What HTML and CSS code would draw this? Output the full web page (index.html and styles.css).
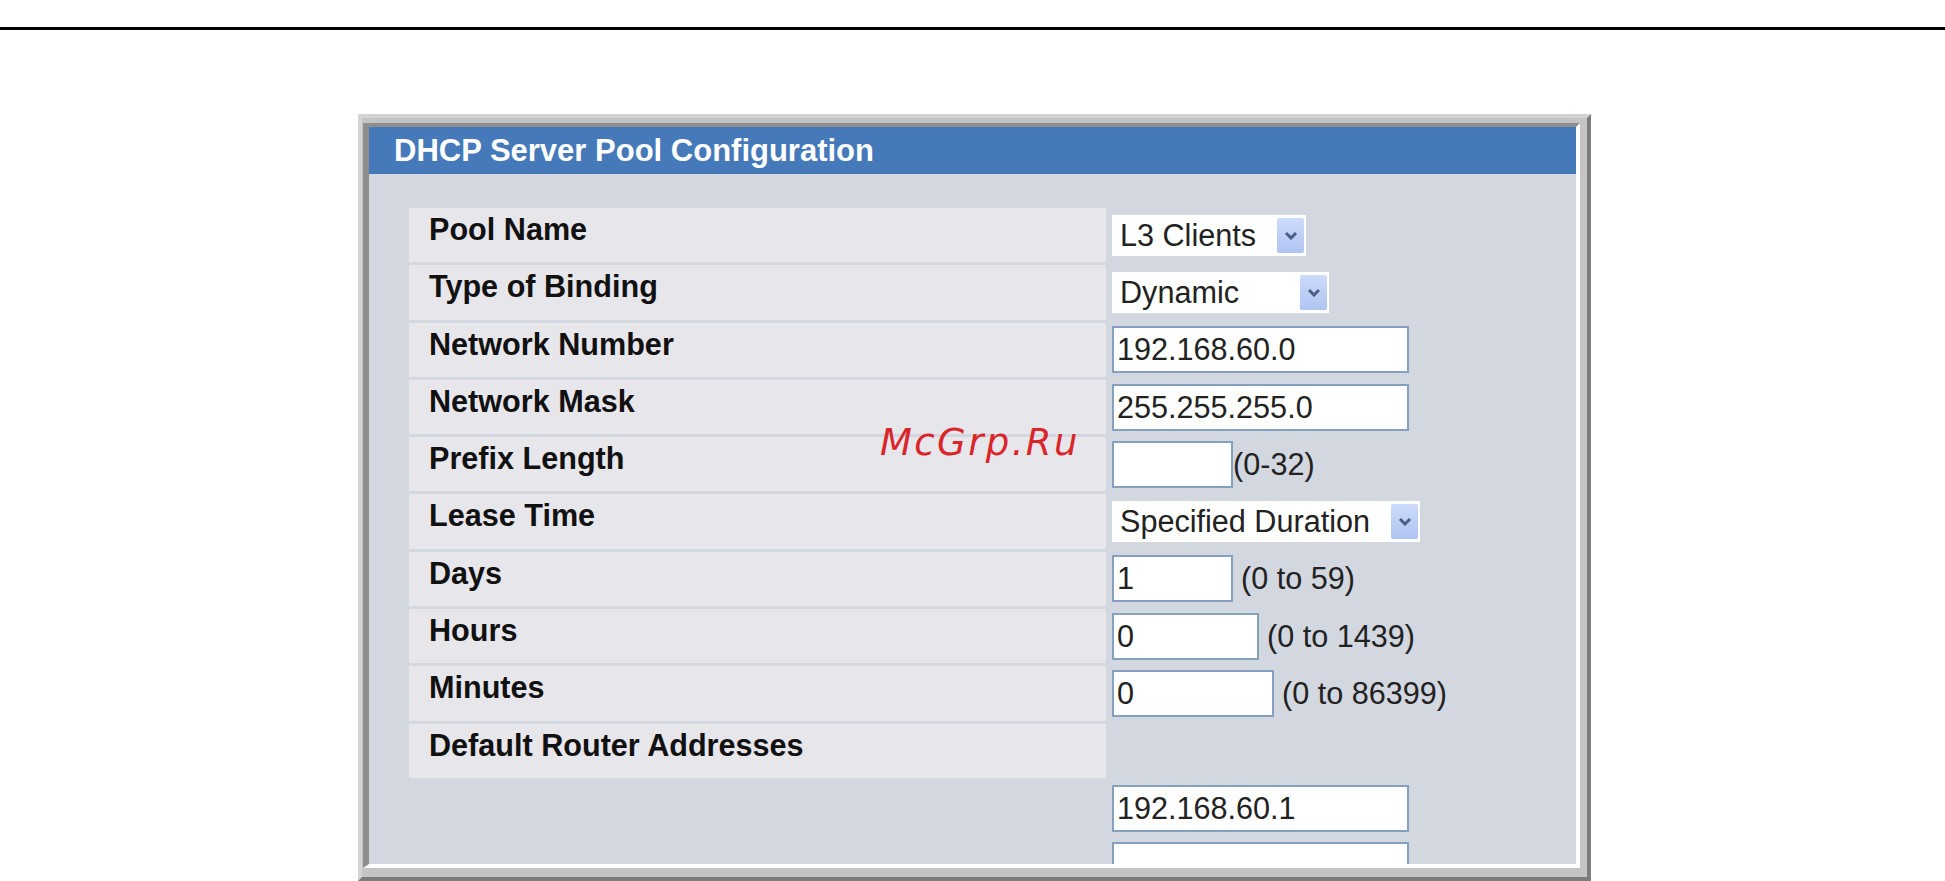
FILE: index.html
```html
<!DOCTYPE html>
<html lang="en">
<head>
    <meta charset="UTF-8">
    <title>DHCP Server Pool Configuration</title>
    <link rel="stylesheet" href="styles.css">
</head>
<body>
    <div class="top-rule"></div>

    <div class="window">
        <div class="window-inner">
            <div class="title-bar">DHCP Server Pool Configuration</div>
            <div class="panel">
                <div class="form-grid">
                    <div class="label">Pool Name</div>
                    <div class="value">
                        <div class="select w-pool"><span>L3 Clients</span><span class="arrow"><svg width="14" height="9" viewBox="0 0 14 9"><path d="M2 2 L7 7 L12 2" fill="none" stroke="#4b5f86" stroke-width="3"/></svg></span></div>
                    </div>

                    <div class="label">Type of Binding</div>
                    <div class="value">
                        <div class="select w-binding"><span>Dynamic</span><span class="arrow"><svg width="14" height="9" viewBox="0 0 14 9"><path d="M2 2 L7 7 L12 2" fill="none" stroke="#4b5f86" stroke-width="3"/></svg></span></div>
                    </div>

                    <div class="label">Network Number</div>
                    <div class="value"><input class="field w-ip" type="text" value="192.168.60.0"></div>

                    <div class="label">Network Mask</div>
                    <div class="value"><input class="field w-ip" type="text" value="255.255.255.0"></div>

                    <div class="label">Prefix Length</div>
                    <div class="value"><input class="field w-short" type="text" value=""><span>(0-32)</span></div>

                    <div class="label">Lease Time</div>
                    <div class="value">
                        <div class="select w-lease"><span>Specified Duration</span><span class="arrow"><svg width="14" height="9" viewBox="0 0 14 9"><path d="M2 2 L7 7 L12 2" fill="none" stroke="#4b5f86" stroke-width="3"/></svg></span></div>
                    </div>

                    <div class="label">Days</div>
                    <div class="value"><input class="field w-short" type="text" value="1"><span class="hint">(0 to 59)</span></div>

                    <div class="label">Hours</div>
                    <div class="value"><input class="field w-hours" type="text" value="0"><span class="hint">(0 to 1439)</span></div>

                    <div class="label">Minutes</div>
                    <div class="value"><input class="field w-minutes" type="text" value="0"><span class="hint">(0 to 86399)</span></div>

                    <div class="label">Default Router Addresses</div>
                    <div class="value"></div>

                    <div class="label blank"></div>
                    <div class="value"><input class="field w-ip" type="text" value="192.168.60.1"></div>

                    <div class="label blank"></div>
                    <div class="value"><input class="field w-ip" type="text" value=""></div>
                </div>
            </div>
        </div>

        <div class="watermark">McGrp.Ru</div>
    </div>
</body>
</html>
```

FILE: styles.css
```css
body {
    margin: 0;
    background: #fff;
    font-family: "Liberation Sans", Arial, sans-serif;
}

.top-rule {
    height: 3px;
    margin-top: 27px;
    background: #000;
}

/* window frame */
.window {
    position: relative;
    box-sizing: border-box;
    width: 1233px;
    margin: 84px 0 0 358px;
    padding: 5px 7px 9px 1px;
    border: 4px solid;
    border-color: #d4d4d4 #7c7c7c #7c7c7c #d4d4d4;
    background: #c4c4c4;
}

.window-inner {
    height: 737px;
    overflow: hidden;
    border-style: solid;
    border-width: 4px 4px 4px 6px;
    border-color: #8e8e8e #fff #fff #8e8e8e;
    background: #d3d7df;
}

.title-bar {
    display: flex;
    align-items: center;
    height: 47px;
    padding-left: 25px;
    background: #4579b9;
    color: #fff;
    font-size: 31px;
    font-weight: bold;
}

.panel {
    padding: 34px 0 0 40px;
}

.form-grid {
    display: grid;
    grid-template-columns: 697px 1fr;
    grid-auto-rows: 54.3px;
    column-gap: 6px;
    row-gap: 3px;
}

.label {
    padding: 4px 0 0 20px;
    background: #e7e6eb;
    color: #111;
    font-size: 30.6px;
    font-weight: bold;
    line-height: 34px;
}

.label.blank {
    background: transparent;
}

.value {
    display: flex;
    align-items: center;
    color: #222;
    font-size: 30.6px;
}

.hint {
    margin-left: 8px;
}

/* drop-downs */
.select {
    display: flex;
    align-items: center;
    justify-content: space-between;
    box-sizing: border-box;
    height: 41px;
    padding-left: 8px;
    background: #fff;
}

.select .arrow {
    display: flex;
    align-items: center;
    justify-content: center;
    width: 27px;
    height: 35px;
    margin-right: 2px;
    border-radius: 2px;
    background: linear-gradient(#cddbfa, #afc4f2);
}

.w-pool { width: 194px; }
.w-binding { width: 217px; }
.w-lease { width: 308px; }

/* text fields */
.field {
    box-sizing: border-box;
    height: 47px;
    margin: 0;
    padding: 0 3px;
    border: 2px solid #86a0c0;
    background: #fff;
    color: #222;
    font: 30.6px "Liberation Sans", Arial, sans-serif;
}

.w-ip { width: 297px; }
.w-short { width: 121px; }
.w-hours { width: 147px; }
.w-minutes { width: 162px; }

.watermark {
    position: absolute;
    left: 518px;
    top: 306px;
    color: #d8262b;
    font-family: "DejaVu Sans", sans-serif;
    font-size: 37px;
    font-style: italic;
    letter-spacing: 2.4px;
    line-height: 37px;
}
```
